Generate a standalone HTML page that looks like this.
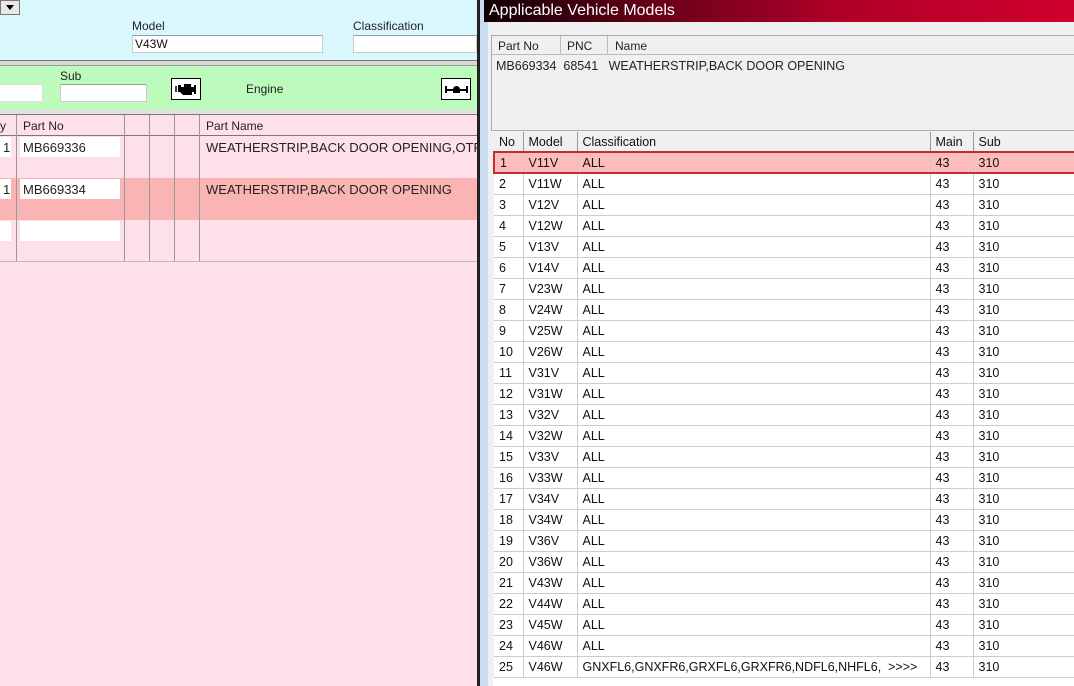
<!DOCTYPE html>
<html><head><meta charset="utf-8"><style>
*{margin:0;padding:0;box-sizing:border-box}
body{width:1074px;height:686px;overflow:hidden;position:relative;font-family:"Liberation Sans",sans-serif;font-size:12px;color:#111;background:#fde0ea}
.a{position:absolute}
.in{position:absolute;background:#fff;border:1px solid #ccc;border-top-color:#999;font-size:12px;padding:1px 2px}
.lbl{position:absolute;font-size:12px;color:#222}
table{border-collapse:collapse;table-layout:fixed}
#rt td{height:21px;border-right:1px solid #ccc;border-bottom:1px solid #ccc;padding:0 0 0 5px;font-size:12.5px;white-space:nowrap;overflow:hidden;background:#fff}
#rt tr.h td{background:#f0f0f0;border-color:#999;height:20px}
#rt tr.s td{background:#ffbcbc}
</style></head><body>
<div class="a" style="left:0;top:0;width:477px;height:60px;background:#d9f8fd"></div>
<div class="a" style="left:0;top:0;width:20px;height:15px;background:#e8e8e8;border:1px solid #777"><div style="margin:4px 0 0 5px;width:0;height:0;border-left:4px solid transparent;border-right:4px solid transparent;border-top:5px solid #000"></div></div>
<div class="lbl" style="left:132px;top:19px">Model</div>
<div class="in" style="left:132px;top:35px;width:191px;height:18px">V43W</div>
<div class="lbl" style="left:353px;top:19px">Classification</div>
<div class="in" style="left:353px;top:35px;width:124px;height:18px"></div>
<div class="a" style="left:0;top:60px;width:477px;height:6px;background:#d6d6d6;border-top:1px solid #777;border-bottom:1px solid #999"></div>
<div class="a" style="left:0;top:66px;width:477px;height:44px;background:#bdfbbd"></div>
<div class="lbl" style="left:60px;top:69px">Sub</div>
<div class="in" style="left:-2px;top:84px;width:45px;height:18px;border-color:#ddd"></div>
<div class="in" style="left:60px;top:84px;width:87px;height:18px"></div>
<div class="a" style="left:171px;top:78px;width:30px;height:22px;border:1px solid #000;background:#fff">
<svg width="28" height="20" style="position:absolute;left:0;top:0"><path d="M6 6h3v2h3V5h7v3h3v-2h2v9h-2v-2h-2v3H11l-3-3H6z" fill="#000"/><path d="M4 7v6" stroke="#000" stroke-width="1.5"/></svg></div>
<div class="lbl" style="left:246px;top:82px">Engine</div>
<div class="a" style="left:441px;top:78px;width:30px;height:22px;border:1px solid #000;background:#fff"><div style="position:absolute;left:3px;top:10px;width:22px;height:1.5px;background:#000"></div><div style="position:absolute;left:3px;top:7px;width:1.5px;height:7px;background:#000"></div><div style="position:absolute;left:24px;top:7px;width:1.5px;height:7px;background:#000"></div><div style="position:absolute;left:11px;top:7px;width:7px;height:7px;background:#000;border-radius:50% 50% 0 0"></div></div>
<div class="a" style="left:0;top:110px;width:477px;height:5px;background:#e0e0e0;border-bottom:1px solid #777"></div>
<div class="a" style="left:0;top:115px;width:477px;height:21px;background:#fde0ea;border-bottom:1px solid #777"></div>
<div class="a" style="left:0;top:178px;width:477px;height:42px;background:#fbb4b4"></div>
<div class="a" style="left:0;top:261px;width:477px;height:1px;background:#bbb"></div>
<div class="a" style="left:16px;top:115px;width:1px;height:146px;background:#999"></div>
<div class="a" style="left:124px;top:115px;width:1px;height:146px;background:#999"></div>
<div class="a" style="left:149px;top:115px;width:1px;height:146px;background:#999"></div>
<div class="a" style="left:174px;top:115px;width:1px;height:146px;background:#999"></div>
<div class="a" style="left:199px;top:115px;width:1px;height:146px;background:#999"></div>
<div class="lbl" style="left:0;top:119px">y</div>
<div class="lbl" style="left:23px;top:119px">Part No</div>
<div class="lbl" style="left:206px;top:119px">Part Name</div>
<div class="a" style="left:0;top:137px;width:11px;height:20px;background:#fff"></div>
<div class="a" style="left:20px;top:137px;width:100px;height:20px;background:#fff"></div>
<div class="a" style="left:0;top:179px;width:11px;height:20px;background:#fff"></div>
<div class="a" style="left:20px;top:179px;width:100px;height:20px;background:#fff"></div>
<div class="a" style="left:0;top:221px;width:11px;height:20px;background:#fff"></div>
<div class="a" style="left:20px;top:221px;width:100px;height:20px;background:#fff"></div>
<div class="lbl" style="left:3px;top:140px;font-size:13px">1</div>
<div class="lbl" style="left:23px;top:140px;font-size:13px">MB669336</div>
<div class="lbl" style="left:206px;top:140px;font-size:13px;white-space:nowrap;width:271px;overflow:hidden">WEATHERSTRIP,BACK DOOR OPENING,OTR</div>
<div class="lbl" style="left:3px;top:182px;font-size:13px">1</div>
<div class="lbl" style="left:23px;top:182px;font-size:13px">MB669334</div>
<div class="lbl" style="left:206px;top:182px;font-size:13px">WEATHERSTRIP,BACK DOOR OPENING</div>
<div class="a" style="left:477px;top:0;width:3px;height:686px;background:#222"></div>
<div class="a" style="left:480px;top:0;width:594px;height:686px;background:#c9def0"></div>
<div class="a" style="left:484px;top:0;width:590px;height:22px;background:linear-gradient(90deg,#100005 0%,#6a0018 30%,#b00028 60%,#d0002e 100%)"></div>
<div class="a" style="left:489px;top:2px;color:#fff;font-size:16px">Applicable Vehicle Models</div>
<div class="a" style="left:488px;top:22px;width:586px;height:664px;background:#f0f0f0"></div>
<div class="a" style="left:491px;top:35px;width:583px;height:96px;background:#f0f0f0;border:1px solid #aaa;border-right:none"></div>
<div class="a" style="left:492px;top:36px;width:582px;height:19px;border-bottom:1px solid #bbb"></div>
<div class="a" style="left:560px;top:36px;width:1px;height:19px;background:#bbb"></div>
<div class="a" style="left:607px;top:36px;width:1px;height:19px;background:#bbb"></div>
<div class="lbl" style="left:498px;top:39px">Part No</div>
<div class="lbl" style="left:567px;top:39px">PNC</div>
<div class="lbl" style="left:615px;top:39px">Name</div>
<div class="lbl" style="left:496px;top:59px;font-size:12.5px">MB669334&nbsp;&nbsp;68541&nbsp;&nbsp;&nbsp;WEATHERSTRIP,BACK DOOR OPENING</div>
<table id="rt" class="a" style="left:493px;top:132px;width:598px">
<colgroup><col style="width:29px"><col style="width:54px"><col style="width:353px"><col style="width:43px"><col style="width:119px"></colgroup>
<tr class="h"><td>No</td><td>Model</td><td>Classification</td><td>Main</td><td>Sub</td></tr>
<tr class="s"><td style="border-left:2px solid #c03030;border-top:2px solid #c03030;border-bottom:2px solid #c03030">1</td><td style="border-top:2px solid #c03030;border-bottom:2px solid #c03030">V11V</td><td style="border-top:2px solid #c03030;border-bottom:2px solid #c03030">ALL</td><td style="border-top:2px solid #c03030;border-bottom:2px solid #c03030">43</td><td style="border-top:2px solid #c03030;border-bottom:2px solid #c03030">310</td></tr>
<tr><td>2</td><td>V11W</td><td>ALL</td><td>43</td><td>310</td></tr>
<tr><td>3</td><td>V12V</td><td>ALL</td><td>43</td><td>310</td></tr>
<tr><td>4</td><td>V12W</td><td>ALL</td><td>43</td><td>310</td></tr>
<tr><td>5</td><td>V13V</td><td>ALL</td><td>43</td><td>310</td></tr>
<tr><td>6</td><td>V14V</td><td>ALL</td><td>43</td><td>310</td></tr>
<tr><td>7</td><td>V23W</td><td>ALL</td><td>43</td><td>310</td></tr>
<tr><td>8</td><td>V24W</td><td>ALL</td><td>43</td><td>310</td></tr>
<tr><td>9</td><td>V25W</td><td>ALL</td><td>43</td><td>310</td></tr>
<tr><td>10</td><td>V26W</td><td>ALL</td><td>43</td><td>310</td></tr>
<tr><td>11</td><td>V31V</td><td>ALL</td><td>43</td><td>310</td></tr>
<tr><td>12</td><td>V31W</td><td>ALL</td><td>43</td><td>310</td></tr>
<tr><td>13</td><td>V32V</td><td>ALL</td><td>43</td><td>310</td></tr>
<tr><td>14</td><td>V32W</td><td>ALL</td><td>43</td><td>310</td></tr>
<tr><td>15</td><td>V33V</td><td>ALL</td><td>43</td><td>310</td></tr>
<tr><td>16</td><td>V33W</td><td>ALL</td><td>43</td><td>310</td></tr>
<tr><td>17</td><td>V34V</td><td>ALL</td><td>43</td><td>310</td></tr>
<tr><td>18</td><td>V34W</td><td>ALL</td><td>43</td><td>310</td></tr>
<tr><td>19</td><td>V36V</td><td>ALL</td><td>43</td><td>310</td></tr>
<tr><td>20</td><td>V36W</td><td>ALL</td><td>43</td><td>310</td></tr>
<tr><td>21</td><td>V43W</td><td>ALL</td><td>43</td><td>310</td></tr>
<tr><td>22</td><td>V44W</td><td>ALL</td><td>43</td><td>310</td></tr>
<tr><td>23</td><td>V45W</td><td>ALL</td><td>43</td><td>310</td></tr>
<tr><td>24</td><td>V46W</td><td>ALL</td><td>43</td><td>310</td></tr>
<tr><td>25</td><td>V46W</td><td>GNXFL6,GNXFR6,GRXFL6,GRXFR6,NDFL6,NHFL6,&nbsp;&nbsp;&gt;&gt;&gt;&gt;</td><td>43</td><td>310</td></tr>
</table>
<div class="a" style="left:493px;top:678px;width:581px;height:8px;background:#fff"></div>
</body></html>
